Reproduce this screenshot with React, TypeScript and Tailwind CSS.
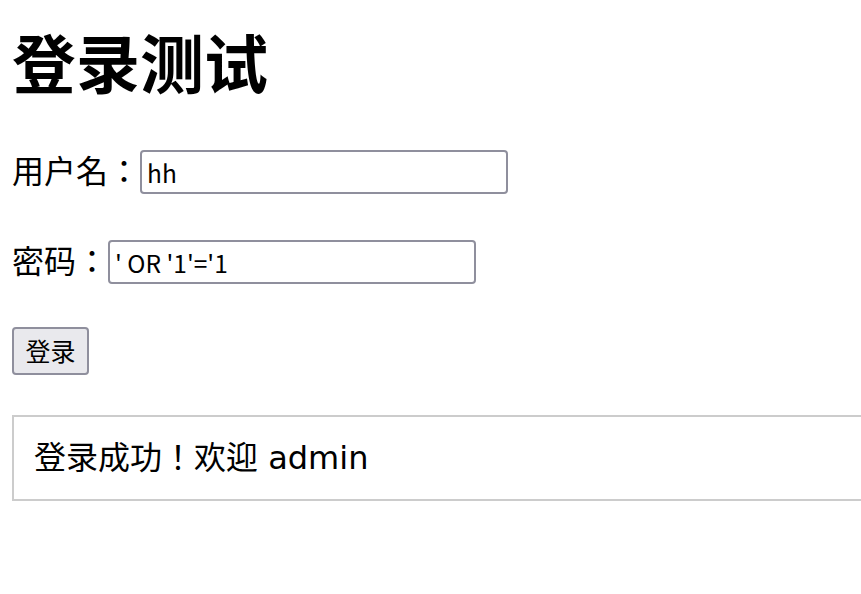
import React from "react";

export default function App() {
  const body = { fontFamily: '"DejaVu Sans", "Noto Sans CJK KR", sans-serif' };
  const field = { fontFamily: '"Noto Sans CJK JP", sans-serif' };
  return (
    <div
      className="w-[861px] h-[594px] overflow-hidden bg-white pl-[12px] text-black flex flex-col items-start"
      style={body}
    >
      <h1
        className="mt-[28px] h-[64px] text-[64px] leading-[64px] font-bold whitespace-nowrap"
        style={field}
      >
        登录测试
      </h1>
      <div className="mt-[58px] flex h-[44px] items-center">
        <label className="text-[32px] leading-[44px] whitespace-nowrap">用户名：</label>
        <input
          defaultValue="hh"
          className="h-[44px] w-[368px] rounded-[4px] border-2 border-[#8f8f9d] bg-white px-[5px] text-[24.5px] text-black outline-none"
          style={field}
        />
      </div>
      <div className="mt-[46px] flex h-[44px] items-center">
        <label className="text-[32px] leading-[44px] whitespace-nowrap">密码：</label>
        <input
          defaultValue="' OR '1'='1"
          className="h-[44px] w-[368px] rounded-[4px] border-2 border-[#8f8f9d] bg-white px-[5px] text-[24.5px] text-black outline-none"
          style={field}
        />
      </div>
      <button
        className="mt-[43px] flex h-[48px] w-[77px] items-center justify-center rounded-[4px] border-2 border-[#8f8f9d] bg-[#e9e9ed] text-[25px] text-black"
        style={field}
      >
        登录
      </button>
      <div className="mt-[40px] flex h-[86px] w-[900px] shrink-0 items-center border-2 border-[#cccccc] px-[20px]">
        <span className="text-[32px] whitespace-nowrap">登录成功！欢迎 admin</span>
      </div>
    </div>
  );
}
